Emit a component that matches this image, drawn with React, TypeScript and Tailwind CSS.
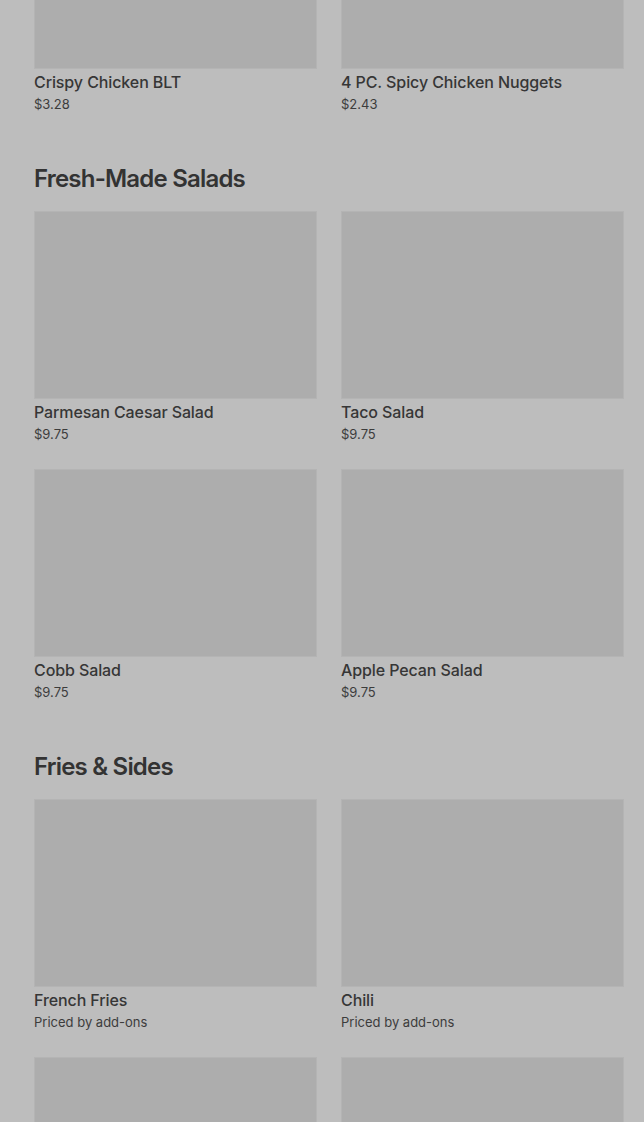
type Item = { name?: string; price?: string };

const sections: { title?: string; items: Item[] }[] = [
  {
    items: [
      { name: "Crispy Chicken BLT", price: "$3.28" },
      { name: "4 PC. Spicy Chicken Nuggets", price: "$2.43" },
    ],
  },
  {
    title: "Fresh-Made Salads",
    items: [
      { name: "Parmesan Caesar Salad", price: "$9.75" },
      { name: "Taco Salad", price: "$9.75" },
      { name: "Cobb Salad", price: "$9.75" },
      { name: "Apple Pecan Salad", price: "$9.75" },
    ],
  },
  {
    title: "Fries & Sides",
    items: [
      { name: "French Fries", price: "Priced by add-ons" },
      { name: "Chili", price: "Priced by add-ons" },
      {},
      {},
    ],
  },
];

const MenuCard = ({ item }: { item: Item }) => (
  <div className="flex flex-col">
    <div className="h-[188px] w-full bg-[#adadad] border border-[#b4b4b4]" />
    {item.name && (
      <>
        <p className="mt-[1px] text-[16px] leading-6 font-medium tracking-[-0.1px] text-[#363636]">
          {item.name}
        </p>
        <p className="text-[13px] leading-5 text-[#3c3c3c]">{item.price}</p>
      </>
    )}
  </div>
);

export default function App() {
  return (
    <div
      className="h-[1122px] bg-[#bdbdbd] overflow-hidden"
      style={{ fontFamily: "Inter, 'Liberation Sans', sans-serif" }}
    >
      <div className="pl-[34px] pr-[20px] -mt-[119px] flex flex-col gap-[49px]">
        {sections.map((section, i) => (
          <section key={i} className="flex flex-col">
            {section.title && (
              <h2 className="text-[24px] leading-8 font-semibold tracking-[-0.8px] text-[#333333] mb-[16px]">
                {section.title}
              </h2>
            )}
            <div className="grid grid-cols-2 gap-x-6 gap-y-[25px]">
              {section.items.map((item, j) => (
                <MenuCard key={j} item={item} />
              ))}
            </div>
          </section>
        ))}
      </div>
    </div>
  );
}
